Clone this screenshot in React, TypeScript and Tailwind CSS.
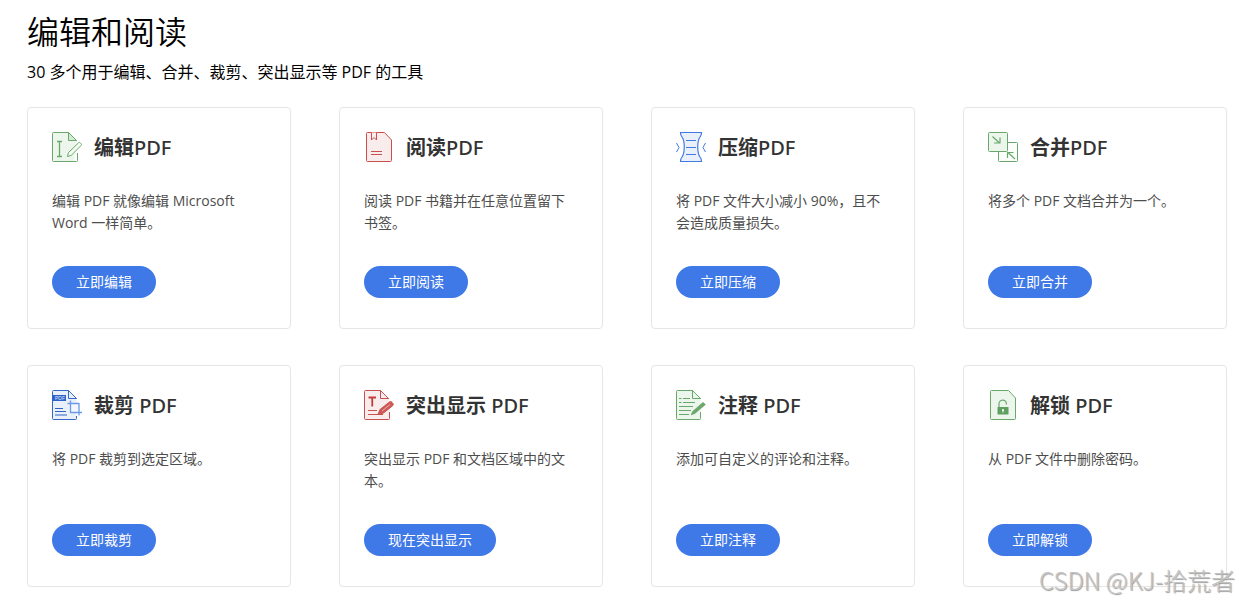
import type { ReactNode } from 'react';

const GREEN = '#6aa76a';
const RED = '#c9504f';
const BLUE = '#3f7ae6';

function Icon({ color, children }: { color: string; children: ReactNode }) {
  return (
    <svg
      viewBox="0 0 30 30"
      className="h-[30px] w-[30px] shrink-0"
      fill="none"
      stroke={color}
      strokeWidth="1"
      strokeLinejoin="round"
      aria-hidden="true"
    >
      {children}
    </svg>
  );
}

function EditIcon() {
  return (
    <Icon color={GREEN}>
      <path d="M25 9.5V8.5L16.5.5H1.5a1 1 0 0 0-1 1v27a1 1 0 0 0 1 1h21v-9l2.5-11Z" fill="#edf6ed" stroke="none" />
      <path d="M24.5 8.5 16.5.5H1.5a1 1 0 0 0-1 1v27a1 1 0 0 0 1 1h23a1 1 0 0 0 1-1V21" />
      <path d="M16.5.5v8h8Z" fill="#d5ead5" />
      <path d="M5 9.5h5M5 24.5h5M7.5 9.5v15" strokeWidth="1.3" />
      <path d="m15.5 24.5 1-4L26.7 10.7a1 1 0 0 1 1.4 0l1.2 1.2a1 1 0 0 1 0 1.4L19.2 23.4Z" fill="#f4faf4" />
    </Icon>
  );
}

function ReadIcon() {
  return (
    <Icon color={RED}>
      <path d="M3.5.5h17l7 7.5v20.5a1 1 0 0 1-1 1h-23a1 1 0 0 1-1-1v-27a1 1 0 0 1 1-1Z" fill="#f9ecec" />
      <path d="M7.5.5V8L10 5.5 12.5 8V.5" fill="#f9ecec" />
      <path d="M7 19.5h11M7 22.5h11" strokeWidth="1.2" />
    </Icon>
  );
}

function CompressIcon() {
  return (
    <Icon color={BLUE}>
      <path
        d="M4.5.5h21a7 7 0 0 1-1.5 4.5c-3 4-3 16 0 20a7 7 0 0 1 1.5 4.500h-21A7 7 0 0 1 6 25c3-4 3-16 0-20A7 7 0 0 1 4.5.5Z"
        fill="#e9f0fa"
        strokeWidth="1.2"
      />
      <path d="M10 8.5h10M10 15.5h10M10 22.5h10" />
      <path d="m.5 11 2.5 4.500L.5 20M29.5 11 27 15.5l2.500 4.500" />
    </Icon>
  );
}

function MergeIcon() {
  return (
    <Icon color={GREEN}>
      <rect x="10.5" y="10.5" width="19" height="19" rx="1" fill="#fbfefb" />
      <rect x=".5" y=".5" width="19" height="19" rx="1" fill="#edf6ed" />
      <path d="m4.5 4.5 7 6.5M12 5.5V11H6" strokeWidth="1.2" />
      <path d="m27 27-7-6.5M19.5 26v-5.500h6" strokeWidth="1.2" />
    </Icon>
  );
}

function CropIcon() {
  return (
    <Icon color={BLUE}>
      <path d="M16.5.5h-15a1 1 0 0 0-1 1v27a1 1 0 0 0 1 1h22a1 1 0 0 0 1-1v-20Z" fill="#e9f0fa" stroke="none" />
      <path d="M24.5 8.5l-8-8h-15a1 1 0 0 0-1 1v27a1 1 0 0 0 1 1h22a1 1 0 0 0 1-1V26M16.5.5v8h8Z" stroke="#3467c8" />
      <rect x="0" y="5" width="14" height="6" fill="#2f62c9" stroke="none" />
      <text x="3" y="9.8" fontSize="5" fill="#dfe9fb" stroke="none" fontFamily="Liberation Sans, sans-serif">
        PDF
      </text>
      <path d="M3 18.5h8M3 21.5h11M3 25h12" stroke="#2f62c9" />
      <rect x="18.5" y="13.5" width="9" height="9" fill="#f4f8fe" stroke="none" />
      <path d="M18.5 10.5v12H30M15.500 13.5H27v12" stroke="#6c9ae8" strokeWidth="1.3" />
    </Icon>
  );
}

function HighlightIcon() {
  return (
    <Icon color={RED}>
      <path d="M16.5.5h-15a1 1 0 0 0-1 1v27a1 1 0 0 0 1 1h23a1 1 0 0 0 1-1v-20Z" fill="#f9ecec" stroke="none" />
      <path d="M24.5 8.5l-8-8h-15a1 1 0 0 0-1 1v27a1 1 0 0 0 1 1h23a1 1 0 0 0 1-1V22M16.5.5v8h8Z" />
      <path d="M4.5 7.5H12M8.250 7.5v9" strokeWidth="1.8" stroke="#c23c3b" />
      <path d="M4 20.5h9M4 24.5h15" strokeWidth="1.2" />
      <path d="m14 24.5 2-5 9.5-7.5a1.800 1.800 0 0 1 2.5.3l.9 1.200a1.600 1.600 0 0 1-.2 2.200l-9.2 7.300Z" fill="#cf5b59" />
      <path d="m18 21 8-6.5" stroke="#f0c4c3" strokeWidth=".8" />
    </Icon>
  );
}

function AnnotateIcon() {
  return (
    <Icon color={GREEN}>
      <path d="M16.5.5h-15a1 1 0 0 0-1 1v27a1 1 0 0 0 1 1h22a1 1 0 0 0 1-1v-20Z" fill="#edf6ed" stroke="none" />
      <path d="M24.5 8.5l-8-8h-15a1 1 0 0 0-1 1v27a1 1 0 0 0 1 1h22a1 1 0 0 0 1-1V22M16.5.5v8h8Z" />
      <path d="M3 8.5h2.5M7 8.5h7M3 12.5h2.500M7 12.5h12M3 16.5h14M3 20.5h12M3 24.5h10" />
      <path d="m15 25 1.5-3.500L27 12.300l2.500 2.200L19 23.500Z" fill={GREEN} strokeWidth=".5" />
    </Icon>
  );
}

function UnlockIcon() {
  return (
    <Icon color={GREEN}>
      <path d="M3.5.5h17l7 7.5v20.5a1 1 0 0 1-1 1h-23a1 1 0 0 1-1-1v-27a1 1 0 0 1 1-1Z" fill="#edf6ed" />
      <path d="M11 17v-3a3.700 3.700 0 0 1 7.400-.5v1" strokeWidth="1.2" />
      <rect x="9.5" y="17" width="11" height="7.5" rx=".5" fill="#5fa05f" stroke="none" />
      <circle cx="15" cy="20" r="1" fill="#fff" stroke="none" />
      <path d="M15 20v2.5" stroke="#fff" />
    </Icon>
  );
}

const tools = [
  { icon: <EditIcon />, name: '编辑', suffix: 'PDF', text: '编辑 PDF 就像编辑 Microsoft Word 一样简单。', action: '立即编辑' },
  { icon: <ReadIcon />, name: '阅读', suffix: 'PDF', text: '阅读 PDF 书籍并在任意位置留下书签。', action: '立即阅读' },
  { icon: <CompressIcon />, name: '压缩', suffix: 'PDF', text: '将 PDF 文件大小减小 90%，且不会造成质量损失。', action: '立即压缩' },
  { icon: <MergeIcon />, name: '合并', suffix: 'PDF', text: '将多个 PDF 文档合并为一个。', action: '立即合并' },
  { icon: <CropIcon />, name: '裁剪', suffix: ' PDF', text: '将 PDF 裁剪到选定区域。', action: '立即裁剪' },
  { icon: <HighlightIcon />, name: '突出显示', suffix: ' PDF', text: '突出显示 PDF 和文档区域中的文本。', action: '现在突出显示' },
  { icon: <AnnotateIcon />, name: '注释', suffix: ' PDF', text: '添加可自定义的评论和注释。', action: '立即注释' },
  { icon: <UnlockIcon />, name: '解锁', suffix: ' PDF', text: '从 PDF 文件中删除密码。', action: '立即解锁' },
];

export default function App() {
  return (
    <main className="relative min-h-screen bg-white pt-3 pr-3 pb-3 pl-[27px] font-['Open_Sans','Noto_Sans_CJK_SC',sans-serif]">
      <h1 className="text-[32px] leading-10 font-[350] text-black">编辑和阅读</h1>
      <p className="mt-[6px] text-base leading-7 text-black">30 多个用于编辑、合并、裁剪、突出显示等 PDF 的工具</p>

      <div className="mt-[21px] grid grid-cols-4 gap-x-12 gap-y-9">
        {tools.map((tool) => (
          <section key={tool.action} className="flex flex-col items-start rounded border border-[#e6e6e6] px-6 pt-6 pb-[30px]">
            <div className="flex items-center gap-3">
              {tool.icon}
              <h2 className="pt-0.5 text-xl leading-7 font-bold whitespace-pre text-[#333]">
                {tool.name}
                <span className="font-['Noto_Sans'] font-medium">{tool.suffix}</span>
              </h2>
            </div>
            <p className="mt-7 min-h-11 pr-2 text-sm leading-[22px] text-[#4d4d4d]">{tool.text}</p>
            <button type="button" className="mt-8 h-8 rounded-full bg-[#3f78e7] px-6 text-sm text-white">
              {tool.action}
            </button>
          </section>
        ))}
      </div>

      <div className="pointer-events-none absolute right-1 bottom-1 font-['Noto_Sans_CJK_SC',sans-serif] text-2xl leading-8 font-light text-[#c4c4c4] [text-shadow:1px_1px_1px_#999]">
        CSDN @KJ-拾荒者
      </div>
    </main>
  );
}
